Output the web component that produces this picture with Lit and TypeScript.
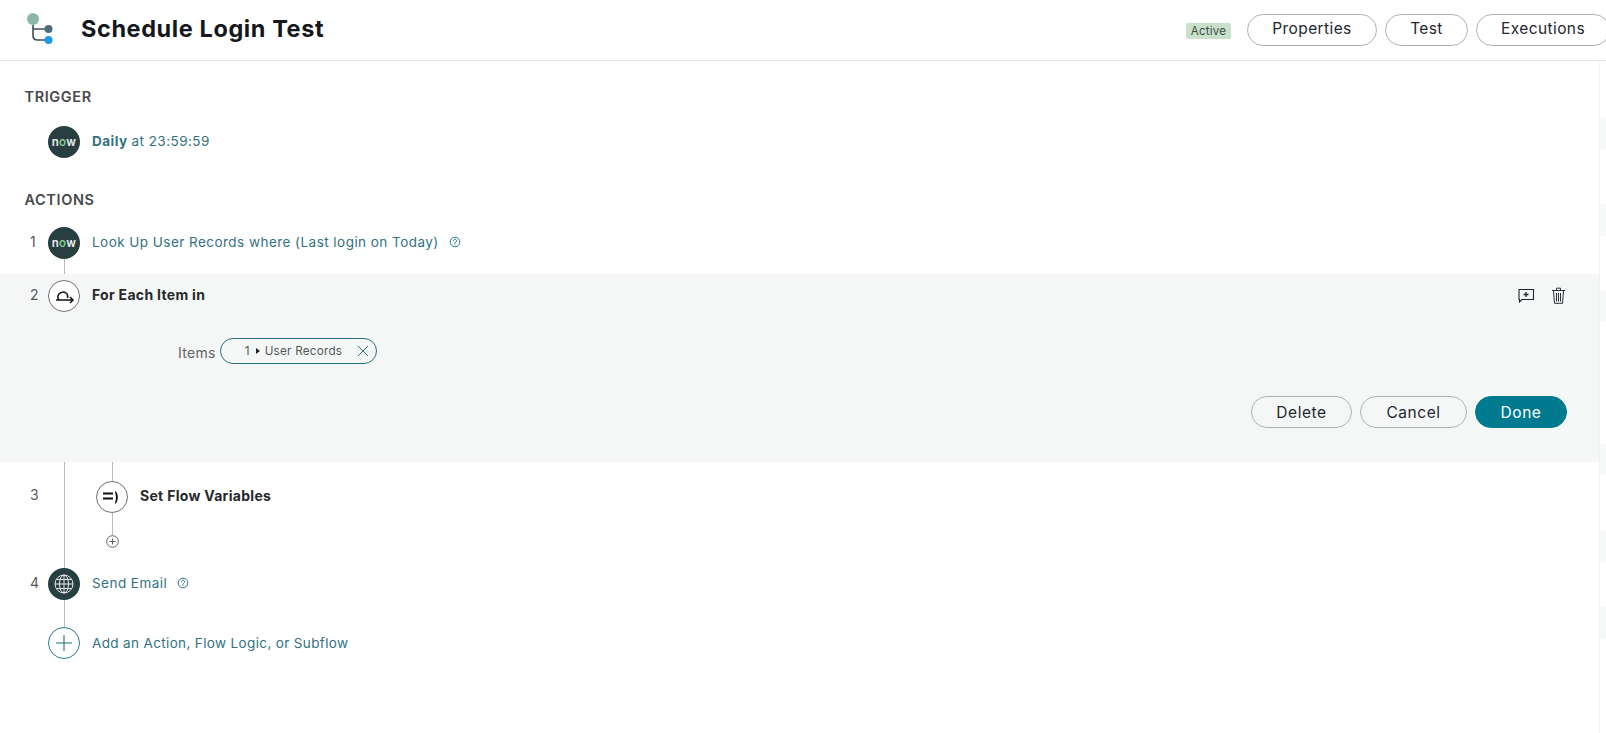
import { LitElement, html, css } from "lit";
import { customElement } from "lit/decorators.js";

const nowIcon = html`<span class="node dark now"><span>n<i>o</i>w</span></span>`;
const help = html`<svg class="help" viewBox="0 0 12 12" width="12" height="12" fill="none" stroke="#2f7585" stroke-width="1"><circle cx="6" cy="6" r="4.8"/><path d="M4.4 4.8a1.6 1.6 0 1 1 2.5 1.3c-.6.4-.9.6-.9 1.2" stroke-linecap="round"/><path d="M6 8.3v.8"/></svg>`;
const stripBars = [
  [57, 31], [55, 32], [54, 31], [123, 31], [55, 32], [45, 32],
];

@customElement("app-root")
export class AppRoot extends LitElement {
  static styles = css`
    :host { display: block; width: 1606px; height: 733px; overflow: hidden; background: #fff; font-family: Inter, "Liberation Sans", sans-serif; color: #2a2d30; }
    .header { height: 60px; border-bottom: 1px solid #e6e6e6; display: flex; align-items: center; }
    .logo { margin-left: 24px; flex: none; display: block; }
    h1 { margin: -4px 0 0 25px; font-size: 23.5px; font-weight: 700; letter-spacing: 0.025em; color: #14181c; flex: 1; white-space: nowrap; }
    .hright { display: flex; align-items: center; flex: none; margin-right: -4px; }
    .badge { width: 45px; height: 16px; line-height: 16px; margin-right: 8px; margin-top: 1px; text-align: center; font-size: 11.5px; background: #c9e0ca; color: #3c4a42; border-radius: 2px; letter-spacing: 0.02em; }
    .pill { box-sizing: border-box; height: 32px; border: 1px solid #b0b3b5; border-radius: 16px; display: flex; align-items: center; justify-content: center; font-size: 15.5px; letter-spacing: 0.4px; color: #22262e; margin-left: 8px; white-space: nowrap; padding-bottom: 4px; }
    .props { width: 130px; } .test { width: 83px; } .exec { width: 134px; }

    .main { display: flex; height: 672px; }
    .content { flex: 1; min-width: 0; }
    .strip { width: 6px; flex: none; border-left: 1px solid #f1f2f2; display: flex; flex-direction: column; background: #fefefe; }
    .gap { flex: none; }
    .bar { flex: none; background: #f7f8f8; }

    .label { font-size: 14.5px; font-weight: 600; color: #47494b; margin-left: 24.5px; line-height: 20px; letter-spacing: 0.6px; }
    .trigger-label { margin-top: 26px; }
    .actions-label { margin-top: 32px; }
    .row { display: flex; align-items: center; height: 32px; }
    .trigger-row { margin-top: 19px; padding-left: 48px; }
    .actions-first { margin-top: 17px; }
    .num { width: 48px; box-sizing: border-box; padding-left: 30px; flex: none; font-size: 14px; color: #55595c; line-height: 32px; margin-top: -3px; }
    .node { box-sizing: border-box; width: 32px; height: 32px; border-radius: 50%; flex: none; display: flex; align-items: center; justify-content: center; }
    .dark { background: #293e40; }
    .outline { background: #fff; border: 1px solid #6d7274; }
    .add { background: #fff; border: 1px solid #2a7c8c; }
    .now { color: #eef1f1; font-size: 11.5px; font-weight: 600; letter-spacing: 0.4px; }
    .now i { font-style: normal; color: #7fd08c; }
    .txt { margin-left: 12px; font-size: 13.5px; color: #32727f; white-space: nowrap; letter-spacing: 0.46px; display: flex; align-items: center; margin-top: -3px; }
    .txt b { font-weight: 700; margin-right: 4px; }
    .txt.tight { letter-spacing: 0.36px; margin-top: -1px; }
    .help { margin-left: 10px; flex: none; }
    .bold { margin-left: 12px; font-size: 14px; font-weight: 700; color: #26292c; letter-spacing: 0.3px; margin-top: -4px; }
    .stub { width: 1px; background: #b9bcbe; margin-left: 64px; }
    .s15 { height: 15px; } .s28 { height: 27px; }

    .panel { height: 188px; background: #f5f7f7; box-sizing: border-box; padding-top: 6px; display: flex; flex-direction: column; }
    .tools { margin-left: auto; margin-right: 33px; display: flex; align-items: center; gap: 16px; margin-top: -2px; }
    .items { display: flex; align-items: center; margin: 26px 0 0 178px; height: 26px; }
    .items label { font-size: 14px; color: #5f6366; margin-right: 4px; margin-top: 3px; letter-spacing: 0.02em; }
    .chip { box-sizing: border-box; width: 157px; height: 26px; border: 1px solid #23707f; border-radius: 13px; display: flex; align-items: center; font-size: 11.7px; color: #53585b; padding-left: 24px; letter-spacing: 0.02em; }
    .chip .tri { width: 0; height: 0; border-left: 4px solid #222; border-top: 3.5px solid transparent; border-bottom: 3.5px solid transparent; margin: 0 5px 0 6px; }
    .chip svg { margin-left: auto; margin-right: 7px; }
    .btns { display: flex; justify-content: flex-end; gap: 8px; margin: 32px 32px 0 0; }
    .btns .pill { margin-left: 0; padding-bottom: 0; background: transparent; letter-spacing: 0.55px; }
    .del { width: 101px; } .can { width: 107px; }
    .btns .done { width: 92px; background: #007a8f; border-color: #007a8f; color: #fff; }

    .nest { display: flex; height: 106px; }
    .nest .num { padding-top: 17px; margin-top: 0; height: 49px; }
    .rail { width: 1px; background: #b9bcbe; margin-left: 16px; flex: none; }
    .inner { margin-left: 31px; display: flex; flex-direction: column; }
    .inner .stub { margin-left: 15.5px; }
    .s19 { height: 19px; } .s22 { height: 22px; }
    .mini { width: 13px; height: 13px; margin-left: 10px; display: block; }
    .endrow { padding-left: 48px; }
  `;

  render() {
    return html`
      <div class="header">
        <svg class="logo" width="32" height="40" viewBox="0 0 32 40" fill="none">
          <path d="M9 15v10.500q0 4.500 4.500 4.500H22M9 19h13" stroke="#3d4c57" stroke-width="1.6"/>
          <circle cx="9" cy="9" r="6" fill="#8bb8a5"/>
          <circle cx="24.500" cy="19" r="4" fill="#4e6b82"/>
          <circle cx="24.500" cy="30" r="4" fill="#1f9ae0"/>
        </svg>
        <h1>Schedule Login Test</h1>
        <div class="hright">
          <span class="badge">Active</span>
          <span class="pill props">Properties</span>
          <span class="pill test">Test</span>
          <span class="pill exec">Executions</span>
        </div>
      </div>
      <div class="main">
        <div class="content">
          <div class="label trigger-label">TRIGGER</div>
          <div class="row trigger-row">${nowIcon}<span class="txt"><b>Daily</b> at 23:59:59</span></div>
          <div class="label actions-label">ACTIONS</div>
          <div class="row actions-first"><span class="num">1</span>${nowIcon}<span class="txt">Look Up User Records where (Last login on Today)${help}</span></div>
          <div class="stub s15"></div>
          <div class="panel">
            <div class="row"><span class="num">2</span>
              <span class="node outline">
                <svg width="24" height="24" viewBox="0 0 24 24" fill="none" stroke="#111" stroke-width="1.500"><path d="M4 16h17M18 13l3 3-3 3"/><path d="M7 16c-1.500-2-1.500-4.200 0-6 1.600-2 5-2.500 7-1 1.500 1.100 2 3 1.500 5"/></svg>
              </span>
              <span class="bold">For Each Item in</span>
              <span class="tools">
                <svg width="18" height="16" viewBox="0 0 18 16" fill="none" stroke="#1e2430" stroke-width="1.100"><path d="M2 2.500h14.500v10H5L2.500 15V12.500H2z"/><path d="M9 5v5M6.500 7.500h5" stroke-width="1.300"/></svg>
                <svg width="15" height="17" viewBox="0 0 15 17" fill="none" stroke="#2a3038" stroke-width="1"><path d="M1 3.500h13M5.500 3V1.200h4V3M2.500 4l1 12.300h8L12.500 4"/><path d="M5.500 6v8.500M7.500 6v8.500M9.500 6v8.500"/></svg>
              </span>
            </div>
            <div class="items"><label>Items</label>
              <span class="chip">1<span class="tri"></span>User Records
                <svg width="12" height="12" viewBox="0 0 12 12" stroke="#23707f" stroke-width="1" fill="none"><path d="M1 1l10 10M11 1 1 11"/></svg>
              </span>
            </div>
            <div class="btns">
              <span class="pill del">Delete</span>
              <span class="pill can">Cancel</span>
              <span class="pill done">Done</span>
            </div>
          </div>
          <div class="nest">
            <span class="num">3</span>
            <div class="rail"></div>
            <div class="inner">
              <div class="stub s19"></div>
              <div class="row">
                <span class="node outline">
                  <svg width="24" height="24" viewBox="0 0 24 24" fill="#111"><path d="M3 7.500h10v2H3zM3 12.500h10v2H3z"/><path d="M16 6.500c2.500 3.500 2.500 8 0 12h-1.200c1.500-4 1.500-8 0-12z"/></svg>
                </span>
                <span class="bold">Set Flow Variables</span>
              </div>
              <div class="stub s22"></div>
              <svg class="mini" viewBox="0 0 13 13" fill="none" stroke="#5d666b" stroke-width="1"><circle cx="6.500" cy="6.500" r="5.800"/><path d="M6.500 3.500v6M3.500 6.500h6"/></svg>
            </div>
          </div>
          <div class="row"><span class="num">4</span><span class="node dark">
              <svg width="22" height="22" viewBox="0 0 22 22" fill="none" stroke="#e8eaea" stroke-width="1"><circle cx="11" cy="11" r="9"/><ellipse cx="11" cy="11" rx="4.500" ry="9"/><path d="M11 2v18M2 11h18M3.200 6.500h15.600M3.200 15.500h15.600"/></svg>
            </span><span class="txt">Send Email${help}</span></div>
          <div class="stub s28"></div>
          <div class="row endrow"><span class="node add">
              <svg width="18" height="18" viewBox="0 0 18 18" fill="none" stroke="#23707f" stroke-width="1.100"><path d="M9 1v16M1 9h16"/></svg>
            </span><span class="txt tight">Add an Action, Flow Logic, or Subflow</span></div>
        </div>
        <div class="strip">
          ${stripBars.map(([gap, h]) => html`<div class="gap" style="height:${gap}px"></div><div class="bar" style="height:${h}px"></div>`)}
        </div>
      </div>
    `;
  }
}
